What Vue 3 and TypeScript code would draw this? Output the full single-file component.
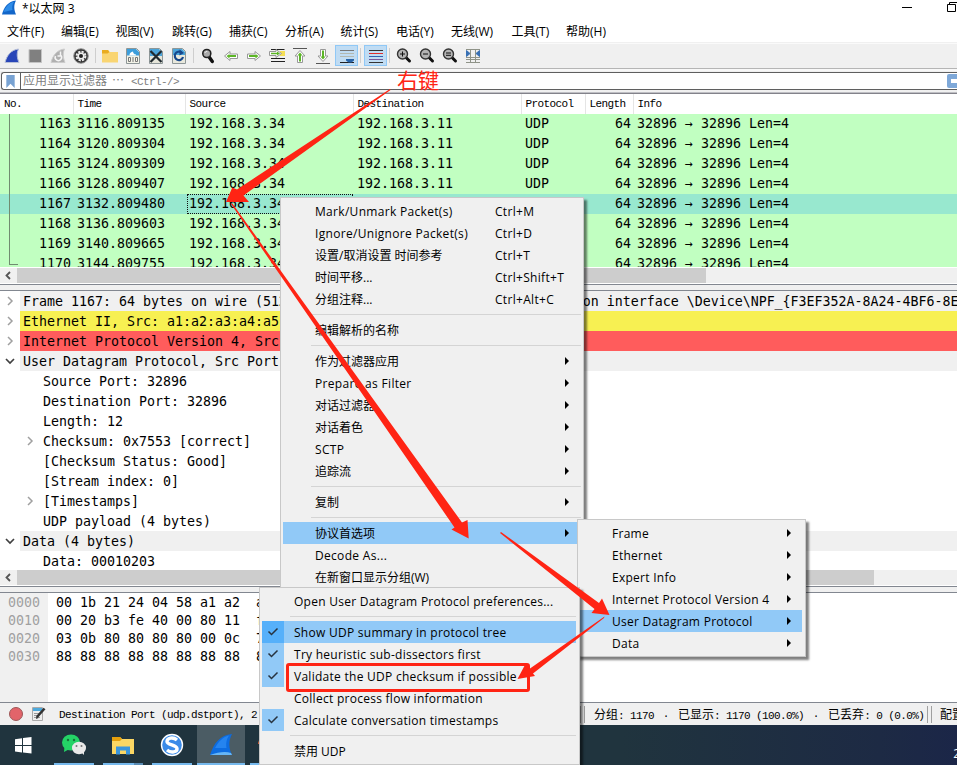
<script setup lang="ts">
interface MenuEntry {
  text?: string
  keys?: string
  arrow?: boolean
  active?: boolean
  checked?: boolean
  sep?: boolean
}
interface TreeRow {
  text: string
  tone: string
  depth: number
  state?: 'open' | 'closed'
}

const menus = ['文件(F)', '编辑(E)', '视图(V)', '跳转(G)', '捕获(C)', '分析(A)', '统计(S)', '电话(Y)', '无线(W)', '工具(T)', '帮助(H)']
const columns = ['No.', 'Time', 'Source', 'Destination', 'Protocol', 'Length', 'Info']

const packets = [
  [1163, '3116.809135'],
  [1164, '3120.809304'],
  [1165, '3124.809309'],
  [1166, '3128.809407'],
  [1167, '3132.809480'],
  [1168, '3136.809603'],
  [1169, '3140.809665'],
  [1170, '3144.809755'],
].map(([no, time]) => ({ no, time, active: no === 1167 }))

const tree: TreeRow[] = [
  { text: 'Frame 1167: 64 bytes on wire (512 bits), 64 bytes captured (512 bits) on interface \\Device\\NPF_{F3EF352A-8A24-4BF6-8E', tone: 'grey', depth: 0, state: 'closed' },
  { text: 'Ethernet II, Src: a1:a2:a3:a4:a5', tone: 'yellow', depth: 0, state: 'closed' },
  { text: 'Internet Protocol Version 4, Src', tone: 'red', depth: 0, state: 'closed' },
  { text: 'User Datagram Protocol, Src Port', tone: 'grey', depth: 0, state: 'open' },
  { text: 'Source Port: 32896', tone: 'plain', depth: 1 },
  { text: 'Destination Port: 32896', tone: 'plain', depth: 1 },
  { text: 'Length: 12', tone: 'plain', depth: 1 },
  { text: 'Checksum: 0x7553 [correct]', tone: 'plain', depth: 1, state: 'closed' },
  { text: '[Checksum Status: Good]', tone: 'plain', depth: 1 },
  { text: '[Stream index: 0]', tone: 'plain', depth: 1 },
  { text: '[Timestamps]', tone: 'plain', depth: 1, state: 'closed' },
  { text: 'UDP payload (4 bytes)', tone: 'plain', depth: 1 },
  { text: 'Data (4 bytes)', tone: 'grey', depth: 0, state: 'open' },
  { text: 'Data: 00010203', tone: 'plain', depth: 1 },
]

const hex = [
  { off: '0000', bytes: '00 1b 21 24 04 58 a1 a2  a3' },
  { off: '0010', bytes: '00 20 b3 fe 40 00 80 11  f3' },
  { off: '0020', bytes: '03 0b 80 80 80 80 00 0c  75' },
  { off: '0030', bytes: '88 88 88 88 88 88 88 88  88' },
]

const packetMenu: MenuEntry[] = [
  { text: 'Mark/Unmark Packet(s)', keys: 'Ctrl+M' },
  { text: 'Ignore/Unignore Packet(s)', keys: 'Ctrl+D' },
  { text: '设置/取消设置 时间参考', keys: 'Ctrl+T' },
  { text: '时间平移...', keys: 'Ctrl+Shift+T' },
  { text: '分组注释...', keys: 'Ctrl+Alt+C' },
  { sep: true },
  { text: '编辑解析的名称' },
  { sep: true },
  { text: '作为过滤器应用', arrow: true },
  { text: 'Prepare as Filter', arrow: true },
  { text: '对话过滤器', arrow: true },
  { text: '对话着色', arrow: true },
  { text: 'SCTP', arrow: true },
  { text: '追踪流', arrow: true },
  { sep: true },
  { text: '复制', arrow: true },
  { sep: true },
  { text: '协议首选项', arrow: true, active: true },
  { text: 'Decode As...' },
  { text: '在新窗口显示分组(W)' },
]
const protocolMenu: MenuEntry[] = [
  { text: 'Frame', arrow: true },
  { text: 'Ethernet', arrow: true },
  { text: 'Expert Info', arrow: true },
  { text: 'Internet Protocol Version 4', arrow: true },
  { text: 'User Datagram Protocol', arrow: true, active: true },
  { text: 'Data', arrow: true },
]
const udpMenu: MenuEntry[] = [
  { text: 'Open User Datagram Protocol preferences...' },
  { sep: true },
  { text: 'Show UDP summary in protocol tree', checked: true, active: true },
  { text: 'Try heuristic sub-dissectors first', checked: true },
  { text: 'Validate the UDP checksum if possible', checked: true },
  { text: 'Collect process flow information' },
  { text: 'Calculate conversation timestamps', checked: true },
  { sep: true },
  { text: '禁用 UDP' },
]
const popups = [
  { name: 'packet', items: packetMenu },
  { name: 'protocol', items: protocolMenu },
  { name: 'udp', items: udpMenu },
]
// Latin-only labels are tracked slightly wider than the CJK ones.
const isLatin = (s = ''): boolean => /^[\x20-\x7e]+$/.test(s)
</script>

<template>
  <div class="screen">
    <header class="title">
      <svg class="logo" width="16" height="15" viewBox="0 0 16 15"><path d="M1 14.5C3 7 7 1.500 15 .5C12.500 5 13 10 15 14.500Z" fill="#1266c9" /><path d="M2.500 12C5 6.500 8 3 13 1.800C11 5 11 8 11.500 10Z" fill="#2f8ce8" /></svg>
      <span class="caption">*以太网 3</span>
      <svg class="winbtns" width="60" height="16" viewBox="0 0 60 16"><path d="M5 7.500H15M50.500 4.500H58.500V11.500H50.500ZM52.500 4V2.500H60" fill="none" stroke="#000" /></svg>
    </header>
    <nav class="menubar"><span v-for="m in menus" :key="m">{{ m }}</span></nav>

    <div class="toolbar">
      <i class="tool"><svg viewBox="0 0 16 16"><path d="M1 14.500C3 7 7 2 14.500 1C12.500 5 13 10 15 14.500Z" fill="#2845b8" stroke="#b6bfd8" /></svg></i>
      <i class="tool"><svg viewBox="0 0 16 16"><path d="M2 1.500H14.500V14.500H2Z" fill="#808080" stroke="#c4c4c4" /></svg></i>
      <i class="tool"><svg viewBox="0 0 16 16"><path d="M1 14.500C3 7 7 2 14.500 1C12.500 5 13 10 15 14.500Z" fill="#b0b0b0" stroke="#ccc" /><path d="M5.500 8A3.200 3.200 0 1 0 10.500 7M10.500 3.500V8H7.500" fill="none" stroke="#f4f4f4" stroke-width="1.500" /></svg></i>
      <i class="tool"><svg viewBox="0 0 16 16"><circle cx="8" cy="8" r="7.300" fill="#333" stroke="#999" /><circle cx="8" cy="8" r="4.400" fill="none" stroke="#eee" stroke-width="2" stroke-dasharray="2.300 1.150" /><circle cx="8" cy="8" r="3.600" fill="#eee" /><circle cx="8" cy="8" r="2" fill="#222" /></svg></i>
      <i class="bar"></i>
      <i class="tool"><svg viewBox="0 0 16 16"><path d="M0 2H6L7.500 4H16V14.500H0Z" fill="#f9d572" /><path d="M0 2H6L7.500 4L5.500 5.500H0Z" fill="#e9ac20" /></svg></i>
      <i class="tool"><svg viewBox="0 0 16 16"><path d="M1.500 .5H11.500L14.500 3.500V15.500H1.500Z" fill="#f3f3e8" stroke="#8d9697" /><path d="M2 1H11L14 4V7.500H2Z" fill="#3d9edb" /><path d="M4.500 7C4.500 5 6 4 8 3.500C8 5 9 6.500 11 6.500V7.500H4.500Z" fill="#fff" /><path d="M3.500 9.500H5.500V13.500H3.500ZM8 9V14M10.500 9.500H12.500V13.500H10.500Z" fill="none" stroke="#777" /></svg></i>
      <i class="tool"><svg viewBox="0 0 16 16"><path d="M1.500 .5H11.500L14.500 3.500V15.500H1.500Z" fill="#e5e5d9" stroke="#8d9697" /><path d="M2 1H11L14 4V8H2Z" fill="#4ca5da" /><path d="M2.500 3L13.500 14M13.500 3L2.500 14" stroke="#20292f" stroke-width="2.200" /></svg></i>
      <i class="tool"><svg viewBox="0 0 16 16"><path d="M1.500 .5H11.500L14.500 3.500V15.500H1.500Z" fill="#e8e8dc" stroke="#8d9697" /><path d="M2 1H11L14 4V7H2Z" fill="#4ca5da" /><path d="M10.500 4.500A4.200 4.200 0 1 0 12 9" fill="none" stroke="#17478b" stroke-width="2.200" /><path d="M8.500 1.500L13 5L8.500 7.500Z" fill="#17478b" /></svg></i>
      <i class="bar"></i>
      <i class="tool"><svg viewBox="0 0 16 16"><path d="M8.800 8.500L12.300 13.500" stroke="#111" stroke-width="3.400" stroke-linecap="round" /><circle cx="6.800" cy="5.500" r="4" fill="#aaa" stroke="#222" stroke-width="1.600" /><path d="M4.800 5A2.300 2.300 0 0 1 7.300 3.500" fill="none" stroke="#eee" /></svg></i>
      <i class="tool"><svg viewBox="0 0 16 16"><path d="M1.500 8L7 3.500V6H14.500V10.500H7V12.500Z" fill="#fff" stroke="#989898" /><path d="M3.500 8L6.500 6V7H13V9H6.500V10.500Z" fill="#5cb526" /></svg></i>
      <i class="tool"><svg viewBox="0 0 16 16"><path d="M14.500 8L9 3.500V6H1.500V10.500H9V12.500Z" fill="#fff" stroke="#989898" /><path d="M12.500 8L9.500 6V7H3V9H9.500V10.500Z" fill="#5cb526" /></svg></i>
      <i class="tool"><svg viewBox="0 0 16 16"><path d="M2 1.500H15.500M2 10.500H16M2 13.500H16" stroke="#222" /><path d="M11 3H16V8H11Z" fill="#f5df55" /><path d="M.5 3.500H7V1.500L12.500 5.500L7 9.500V7.500H.5Z" fill="#fff" stroke="#989898" /><path d="M2 4.700H8V3.500L11 5.500L8 7.500V6.300H2Z" fill="#5cb526" /></svg></i>
      <i class="tool"><svg viewBox="0 0 16 16"><path d="M1 .5H15" stroke="#555" /><path d="M8 2.500L13 8H10.500V14.500H5.500V8H3Z" fill="#fff" stroke="#989898" /><path d="M8 4.500L10.500 7.500H9V13.500H7V7.500H5.500Z" fill="#5cb526" /></svg></i>
      <i class="tool"><svg viewBox="0 0 16 16"><path d="M1 15.500H15" stroke="#555" /><path d="M8 13.500L13 8H10.500V1.500H5.500V8H3Z" fill="#fff" stroke="#989898" /><path d="M8 11.500L10.500 8.500H9V2.500H7V8.500H5.500Z" fill="#5cb526" /></svg></i>
      <i class="tool on"><svg viewBox="0 0 16 16"><path d="M2 5.500H16M2 8.500H16" stroke="#b3b8b0" /><path d="M2 2.500H16" stroke="#777" /><path d="M2 14.500H16" stroke="#222" /><path d="M8 11H16V12.500L13.500 14.500H10.500L8 12.500Z" fill="#2864a8" /></svg></i>
      <i class="bar"></i>
      <i class="tool on"><svg viewBox="0 0 16 16"><path d="M2 2.500H16M2 14.500H16" stroke="#333" /><path d="M2 5.500H16" stroke="#e02d2d" /><path d="M2 8.500H16" stroke="#3361b0" /><path d="M2 11.500H16" stroke="#78589c" /></svg></i>
      <i class="bar"></i>
      <i v-for="z in ['M4 6H9M6.500 3.500V8.500', 'M4 6H9', 'M4 5H9M4 7.300H9']" :key="z" class="tool"><svg viewBox="0 0 16 16"><path d="M10 9.500L13.500 13" stroke="#111" stroke-width="3" stroke-linecap="round" /><circle cx="6.500" cy="6" r="5" fill="#b4b4b4" stroke="#333" stroke-width="1.400" /><path :d="z" stroke="#111" /></svg></i>
      <i class="tool"><svg viewBox="0 0 16 16"><path d="M1 1.500H15M1 9.500H15M1 11.500H15M1 14.500H15M5.500 1V15M10.500 1V15" stroke="#8f9388" /><path d="M1.500 2.500L5 5.500L1.500 8.500ZM14.500 2.500L11 5.500L14.500 8.500Z" fill="#3870b4" stroke="#3870b4" /></svg></i>
    </div>

    <div class="filterwrap">
      <div class="filter">
        <svg class="mark" width="9" height="14" viewBox="0 0 9 14"><path d="M0 0H9V14L4.500 9.500L0 14Z" fill="#78a2d2" /></svg>
        <span class="ph"><b class="cjk">应用显示过滤器</b><b class="wide dots">⋯</b><b>&lt;Ctrl-/&gt;</b></span>
        <span class="go"><i></i></span>
      </div>
    </div>

    <section class="packets">
      <div class="cols heads"><span v-for="c in columns" :key="c">{{ c }}</span></div>
      <div class="list">
        <div v-for="p in packets" :key="p.no" class="cols row" :class="{ sel: p.active }">
          <span class="num">{{ p.no }}</span>
          <span>{{ p.time }}</span>
          <span :class="{ focus: p.active }">192.168.3.34</span>
          <span>192.168.3.11</span>
          <span>UDP</span>
          <span class="num">64</span>
          <span>32896 → 32896 Len=4</span>
        </div>
        <i class="related"></i>
      </div>
      <div class="scroll"><svg width="17" height="15" viewBox="0 0 17 15"><path d="M10 4L6.500 7.500L10 11" fill="none" stroke="#555" stroke-width="1.800" /></svg><i class="thumb first"></i></div>
    </section>
    <div class="split"></div>

    <section class="details">
      <div class="tree">
        <div v-for="(r, i) in tree" :key="i" class="node" :class="'d' + r.depth">
          <span class="twist">
            <svg v-if="r.state === 'closed'" width="10" height="10" viewBox="0 0 10 10"><path d="M3 1L7 5L3 9" fill="none" stroke="#a0a0a0" stroke-width="1.500" /></svg>
            <svg v-else-if="r.state === 'open'" width="10" height="10" viewBox="0 0 10 10"><path d="M1 3L5 7L9 3" fill="none" stroke="#404040" stroke-width="1.700" /></svg>
          </span>
          <span class="label" :class="r.tone">{{ r.text }}</span>
        </div>
      </div>
      <div class="scroll"><svg width="17" height="15" viewBox="0 0 17 15"><path d="M10 4L6.500 7.500L10 11" fill="none" stroke="#555" stroke-width="1.800" /></svg><i class="thumb second"></i></div>
    </section>
    <div class="split"></div>

    <section class="hex">
      <div class="offsets"><div v-for="h in hex" :key="h.off">{{ h.off }}</div></div>
      <div class="bytes"><div v-for="h in hex" :key="h.off">{{ h.bytes }}</div></div>
    </section>

    <footer class="status">
      <i class="rec"></i>
      <svg class="note" width="16" height="16" viewBox="0 0 16 16"><path d="M1.500 1.500H11.500V14.500H1.500Z" fill="#eee" stroke="#aaa" /><path d="M2 2H11V5H2Z" fill="#4da9dc" /><path d="M3 7.500H8M3 9.500H7M3 11.500H9" stroke="#999" /><path d="M6 11L13.500 2.500" stroke="#333" stroke-width="2.600" /><path d="M5 13L5.500 10L7.500 12Z" fill="#333" /></svg>
      <span class="field">Destination Port (udp.dstport), 2</span>
      <i class="grip"></i>
      <span class="counts"><b class="cjk">分组</b>: 1170 <b class="wide">·</b> <b class="cjk">已显示</b>: 1170 (100.0%) <b class="wide">·</b> <b class="cjk">已丢弃</b>: 0 (0.0%)</span>
      <i class="grip"></i>
      <span class="profile cjk">配置</span>
    </footer>

    <div class="taskbar">
      <div class="start"><svg width="17" height="17" viewBox="0 0 17 17"><path d="M0 2.300L7 1.200V8H0ZM8 1L16.500 0V8H8ZM0 9H7V15.500L0 14.500ZM8 9H16.500V16.500L8 15.500Z" fill="#fff" /></svg></div>
      <div class="task"><svg width="26" height="22" viewBox="0 0 26 22"><ellipse cx="10" cy="8.500" rx="9" ry="8" fill="#24d366" /><path d="M3.500 13L3 18L8.500 15Z" fill="#24d366" /><ellipse cx="18" cy="14" rx="7" ry="6.200" fill="#e9e9e9" /><path d="M20 18L23 21V17Z" fill="#e9e9e9" /><g fill="#17753b"><circle cx="7" cy="6" r="1.200" /><circle cx="13" cy="6" r="1.200" /></g><g fill="#777"><circle cx="15.500" cy="12" r="1" /><circle cx="20.500" cy="12" r="1" /></g></svg></div>
      <div class="task folder"><svg width="22" height="19" viewBox="0 0 22 19"><path d="M0 1H8L10 3H22V18H0Z" fill="#fbd764" /><path d="M0 1H8L10 3L8 5H0Z" fill="#e5a00d" /><path d="M4 18.500V10.500H18V18.500H14V14.500H8V18.500Z" fill="#3b96dc" /></svg></div>
      <div class="task"><svg width="24" height="24" viewBox="0 0 24 24"><circle cx="12" cy="12" r="10.500" fill="#3b8be8" stroke="#fff" stroke-width="1.400" /><path d="M17 7C13 3.500 7 5 7 8.500C7 12 16.500 11.800 17 15.500C17.500 19 11 20.500 7 17" fill="none" stroke="#fff" stroke-width="3.400" /></svg></div>
      <div class="task current"><svg width="24" height="24" viewBox="0 0 24 24"><path d="M1 22C5 10 11 2 23 1C19 8 20 16 23 22Z" fill="#0d6ce0" /><path d="M1 22C9 19 17 18 22 20L23 22Z" fill="#66b5f5" /><path d="M6 15C10 8 14 4 20 2.500C17 7 17 11 17.500 15Z" fill="#2584ef" /></svg></div>
      <div class="task browser"><i></i></div>
      <span class="clock">2</span>
    </div>

    <div v-for="p in popups" :key="p.name" class="popup" :class="p.name">
      <template v-for="(m, i) in p.items" :key="i">
        <div v-if="m.sep" class="line"></div>
        <div v-else class="item" :class="{ active: m.active }">
          <span class="check" :class="{ ticked: m.checked }"><svg v-if="m.checked" width="12" height="10" viewBox="0 0 12 10"><path d="M1.500 4.500L4.500 7.500L10.500 1.500" fill="none" stroke="#27333f" stroke-width="1.500" /></svg></span>
          <span class="text" :class="{ latin: isLatin(m.text) }">{{ m.text }}</span>
          <span v-if="m.keys" class="keys latin">{{ m.keys }}</span>
          <svg v-if="m.arrow" class="arrow" width="4" height="8" viewBox="0 0 4 8"><path d="M0 0L4 4L0 8Z" /></svg>
        </div>
      </template>
    </div>

    <div class="frame"></div>
    <svg class="arrows" width="957" height="765" viewBox="0 0 957 765">
      <g fill="#ff2414">
        <path d="M390 89L237 189.500L232.300 187.500L226 202L249 202L243.500 195.500L390.500 90Z" />
        <path d="M232 203L462 522.500L467.500 520L468.700 538.500L451.500 529.500L454.500 527.500L231 204Z" />
        <path d="M501 532L599 603L602 598.500L609.500 615L591.500 613L594.500 609L500 533Z" />
        <path d="M604.500 616.500L530 668.500L525.700 663.500L517.500 679L535 676L533 673.500L604 618Z" />
      </g>
    </svg>
    <span class="callout">右键</span>
  </div>
</template>

<style>
body { margin: 0; overflow: hidden; }
</style>

<style scoped>
.screen { position: relative; display: flex; flex-direction: column; width: 957px; height: 765px; overflow: hidden; background: #f0f0f0; color: #000; font: 12px "Open Sans", "Noto Sans CJK SC", sans-serif; }
.screen * { box-sizing: border-box; }
.title, .menubar, .toolbar, .filterwrap, .packets, .details, .split, .hex, .status, .taskbar { flex: none; }
svg { display: block; flex: none; }
i { font-style: normal; flex: none; }
b { font-weight: normal; white-space: pre; }
.wide { display: inline-block; width: 12px; text-align: center; letter-spacing: 0; }
.cjk { font-size: 12px; letter-spacing: 0; }

.title { display: flex; height: 18px; background: #fff; }
.logo { margin-left: 1px; }
.caption { flex: 1; margin-left: 5px; line-height: 17px; }
.menubar { display: grid; grid-template-columns: 54px 54.500px 56.500px 57px 56px 55.500px 55.500px 55px 60.500px 54.500px 60px; height: 24px; padding-left: 7px; background: #fff; line-height: 27px; white-space: nowrap; }

.toolbar { display: flex; align-items: center; height: 27px; padding: 1px 0 1px 1px; border-top: 1px solid #f0f0f0; border-bottom: 1px solid #b5b5b5; box-shadow: inset 0 1px #fafafa; }
.tool { display: grid; align-items: center; justify-content: start; width: 23px; height: 21px; padding-left: 3px; }
.tool svg { width: 16px; height: 16px; }
.on { padding-left: 2px; border: 1px solid #90c8f6; background: #c0dcf3; }
.bar { width: 6px; height: 15px; background: linear-gradient(90deg, transparent 2px, #cecece 2px, #cecece 3px, transparent 3px); }

.filterwrap { height: 25px; padding: 3px 0 0 1px; border-bottom: 1px solid #82828a; box-shadow: inset 0 -1px #bfbfc4, inset 0 2px #f8f8f8; }
.filter { display: flex; align-items: center; height: 18px; padding-left: 4px; border: 1px solid #5f5f5f; border-right: 0; border-radius: 3px 0 0 3px; background: #fff; }
.mark { height: 13px; }
.ph { display: flex; flex: 1; height: 16px; margin-left: 5px; padding-left: 2px; border-left: 1px solid #5f5f5f; color: #808080; line-height: 18px; }
.ph, .heads, .status { font-family: "Liberation Mono", "Noto Sans CJK SC", monospace; font-size: 11px; letter-spacing: -.6px; }
.dots { margin: 0 7px 0 5px; font-size: 12px; }
.go { display: flex; align-items: center; justify-content: flex-end; width: 10px; height: 14px; border-radius: 2px 0 0 2px; background: #7ea8d8; }
.go i { width: 6px; height: 4px; background: #fff; }

.packets { height: 190px; }
.cols { display: grid; grid-template-columns: 73px 112px 168px 168px 64px 48px 1fr; }
.heads { height: 20px; background: #fff; line-height: 21px; }
.heads span { width: calc(100% + 1px); padding-left: 4.500px; border-right: 1px solid #e5e5e5; }
.heads span:first-child { padding-left: 4px; }
.heads span:last-child { border: 0; }
.list { position: relative; height: 153px; overflow: hidden; background: #c1ffc1; }
.row { height: 20px; }
.row, .tree, .hex { font: 13.290px/20px "DejaVu Sans Mono", monospace; white-space: pre; }
.row span { padding-left: 4px; line-height: 19px; }
.row .num { padding: 0 2px 0 0; text-align: right; }
.sel { background: #98e8cf; }
.focus { width: 166px; margin-left: 2px; outline: 1px dotted #111; outline-offset: -1px; padding-left: 2px !important; }
.related { position: absolute; left: 9px; top: 0; width: 9px; height: 151px; border-left: 1px solid #708c70; border-bottom: 1px solid #708c70; }
.scroll { display: flex; height: 17px; border-top: 1px solid #fff; border-bottom: 1px solid #fff; }
.thumb { height: 15px; background: #cdcdcd; }
.first { width: 689px; }
.second { width: 857px; }
.split { height: 7px; border-top: 1px solid #828790; border-bottom: 1px solid #828790; }

.details { height: 295px; background: #fff; }
.tree { height: 279px; overflow: hidden; }
.node { display: flex; height: 20px; }
.d1 { padding-left: 20px; }
.twist { display: grid; flex: none; place-items: center; width: 20px; padding-right: 1px; }
.label { flex: 1; padding-left: 3px; overflow: hidden; line-height: 21px; }
.grey { background: #f0f0f0; }
.yellow { background: #f7f052; }
.red { background: #ff5c5c; }
.details .scroll { height: 16px; border-top: 0; background: #f0f0f0; }

.hex { display: flex; height: 109px; background: #fff; line-height: 18px; }
.offsets { width: 48px; padding: 1px 0 0 8px; background: #f0f0f0; color: #a0a0a0; }
.bytes { padding: 1px 0 0 8px; }

.status { display: flex; align-items: center; height: 23px; border-top: 1px solid #828790; white-space: pre; }
.status span { flex: none; }
.rec { width: 14px; height: 14px; margin-left: 9px; border: 1px solid #9c5757; border-radius: 50%; background: #e2646a; }
.note { margin-left: 8px; }
.field { width: 521px; margin-left: 12px; padding-top: 1px; }
.grip { width: 5px; height: 17px; border: 1px solid #a0a0a0; border-width: 0 1px; }
.counts { width: 333px; margin-left: 9px; }
.profile { margin-left: 8px; }

.taskbar { display: flex; height: 40px; background: linear-gradient(90deg, #20343e, #20343e 65%, #1d2a44 92%, #1b2648); }
.start { display: grid; place-items: center; width: 46px; margin-right: 4px; }
.task { display: grid; place-items: center; width: 48px; margin-right: 1px; background: linear-gradient(#76b9ed, #76b9ed) 50% 100% / 40px 2px no-repeat; }
.folder { background: linear-gradient(90deg, #76b9ed 31px, #5a8cb4 31px) 50% 100% / 40px 2px no-repeat; }
.current { background: linear-gradient(#76b9ed, #76b9ed) 50% 100% / 48px 2px no-repeat, #4b5c64; }
.browser i { width: 24px; height: 24px; border-radius: 50%; background: radial-gradient(circle at 0 30%, #d9623a 4px, transparent 4px); }
.clock { margin: 19px -3px 0 auto; color: #fff; line-height: 20px; }

.popup { position: absolute; border: 1px solid #c8c8c8; background: #f0f0f0; box-shadow: 3px 3px 2px rgba(0, 0, 0, .5); }
.packet { left: 280px; top: 197px; width: 304px; height: 400px; padding: 2px; }
.protocol { left: 577px; top: 519px; width: 229px; height: 138px; padding: 2px 3px 2px 2px; }
.udp { left: 259px; top: 587px; width: 321px; height: 178px; padding: 2px 3px 2px 2px; }
.item { display: flex; align-items: center; height: 22px; line-height: 22px; white-space: pre; }
.line { height: 9px; margin-left: 28px; background: linear-gradient(transparent 4px, #d4d4d4 4px, #d4d4d4 5px, transparent 5px); }
.active { background: #91c9f7; }
.check { display: grid; flex: none; place-items: center; width: 22px; height: 22px; margin-right: 10px; }
.ticked { background: #91c9f7; }
.active .ticked { background: #56b0fa; }
.text, .keys { padding-top: 2px; }
.text { min-width: 180px; }
.latin { letter-spacing: .31px; }
.protocol .latin, .udp .latin { letter-spacing: .27px; }
.arrow { margin-left: auto; margin-right: 12px; }
.protocol .text { min-width: 0; }
.protocol .arrow { margin-right: 11px; }

.frame { position: absolute; left: 286px; top: 663px; width: 244px; height: 29px; border: 3px solid #ff2414; border-radius: 3px; }
.arrows { position: absolute; left: 0; top: 0; }
.callout { position: absolute; left: 397px; top: 64px; color: #ff2414; font: 21px/30px "Noto Sans CJK SC", sans-serif; }
</style>
